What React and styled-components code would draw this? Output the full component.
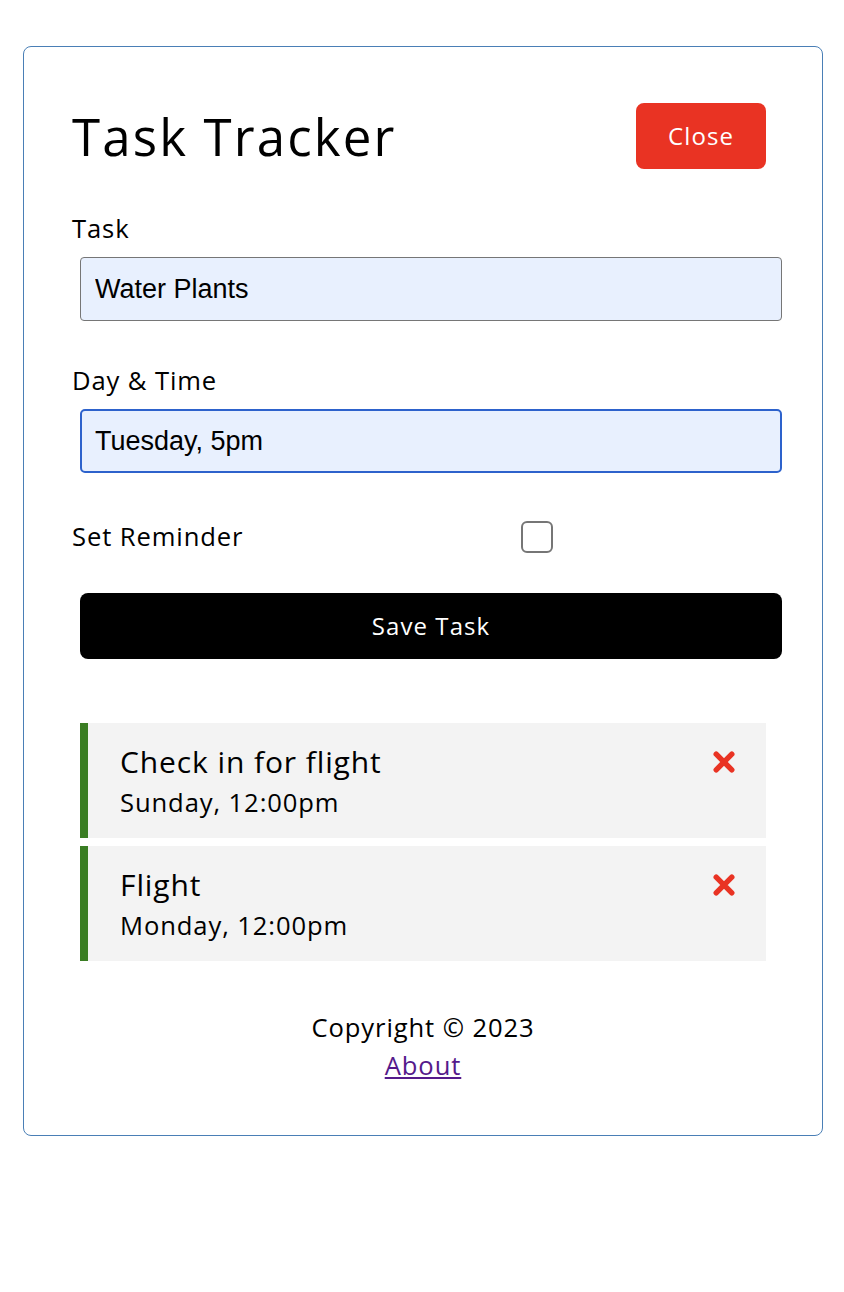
import React, { useState } from 'react';
import styled, { createGlobalStyle } from 'styled-components';

const GlobalStyle = createGlobalStyle`
  * {
    box-sizing: border-box;
    margin: 0;
    padding: 0;
  }
  body {
    background: #fff;
    padding-left: 2px;
    font-family: "Open Sans", "Noto Sans", sans-serif;
    font-size: 25.6px;
    line-height: 1.5;
    letter-spacing: 0.035em;
    color: #000;
  }
`;

const Container = styled.div`
  max-width: 800px;
  margin: 46px auto 0;
  padding: 48px 48px 49px;
  border: 1px solid #4a7fb6;
  border-radius: 8px;
`;

const Header = styled.header`
  display: flex;
  justify-content: space-between;
  align-items: center;
  margin-bottom: 32px;
`;

const Title = styled.h1`
  font-size: 51px;
  font-weight: 500;
  letter-spacing: 0.042em;
`;

const Button = styled.button`
  display: ${({ block }) => (block ? 'block' : 'inline-block')};
  width: ${({ block }) => (block ? '100%' : 'auto')};
  background: ${({ color }) => color};
  color: #fff;
  border: none;
  border-radius: 8px;
  margin: 8px;
  padding: 16px 32px;
  font-family: "Open Sans", "Noto Sans", sans-serif;
  font-size: 24px;
  letter-spacing: 0.045em;
  line-height: 34px;
  cursor: pointer;
`;

const Form = styled.form`
  margin-bottom: 64px;
`;

const FormControl = styled.div`
  display: flow-root;
  margin: 32px 0;
`;

const Label = styled.label`
  display: block;
  line-height: 40px;
`;

const Input = styled.input`
  display: block;
  width: 100%;
  height: 64px;
  margin: 8px;
  padding: 5px ${({ focused }) => (focused ? '13px' : '14px')};
  font-family: "Liberation Sans", Arial, sans-serif;
  font-size: 27px;
  letter-spacing: 0;
  color: #000;
  background: #e8f0fe;
  border: ${({ focused }) => (focused ? '2px solid #2d62cc' : '1px solid #767676')};
  border-radius: ${({ focused }) => (focused ? '5px' : '4px')};
  outline: none;
`;

const CheckRow = styled.div`
  display: flex;
  align-items: center;
  justify-content: space-between;
  margin: 32px 0;
`;

const CheckLabel = styled.label`
  flex: 1;
`;

const CheckBoxWrap = styled.div`
  flex: 2;
  display: flex;
  justify-content: center;
  margin: 8px;
`;

const CheckBox = styled.input`
  appearance: none;
  width: 32px;
  height: 32px;
  border: 2px solid #767676;
  border-radius: 6px;
  background: #fff;
  cursor: pointer;
  &:checked {
    background: #2d62cc;
    border-color: #2d62cc;
  }
`;

const Task = styled.div`
  background: #f3f3f3;
  margin: 8px;
  padding: 16px 31px 16px 32px;
  border-left: ${({ reminder }) => (reminder ? '8px solid #3a7d23' : 'none')};
  cursor: pointer;
`;

const TaskTitle = styled.h3`
  display: flex;
  align-items: center;
  justify-content: space-between;
  font-size: 30px;
  font-weight: 400;
  line-height: 45px;
`;

const TaskDay = styled.p`
  font-size: 25.6px;
  line-height: 38px;
`;

const Footer = styled.footer`
  margin-top: 48px;
  text-align: center;
`;

const FooterLink = styled.a`
  color: #551a8b;
  text-decoration: underline;
`;

const DeleteIcon = () => (
  <svg width="22" height="22" viewBox="0 0 22 22" style={{ cursor: 'pointer' }}>
    <path d="M3.2 3.2 L18.8 18.8 M18.8 3.2 L3.2 18.8" stroke="#e93323" strokeWidth="5.4" strokeLinecap="round" />
  </svg>
);

const tasks = [
  { id: 1, text: 'Check in for flight', day: 'Sunday, 12:00pm', reminder: true },
  { id: 2, text: 'Flight', day: 'Monday, 12:00pm', reminder: true },
];

const App = () => {
  const [text, setText] = useState('Water Plants');
  const [day, setDay] = useState('Tuesday, 5pm');
  const [reminder, setReminder] = useState(false);

  return (
    <>
      <GlobalStyle />
      <Container>
        <Header>
          <Title>Task Tracker</Title>
          <Button color="#e93323">Close</Button>
        </Header>
        <Form onSubmit={(e) => e.preventDefault()}>
          <FormControl>
            <Label>Task</Label>
            <Input type="text" value={text} onChange={(e) => setText(e.target.value)} />
          </FormControl>
          <FormControl>
            <Label>Day &amp; Time</Label>
            <Input type="text" focused value={day} onChange={(e) => setDay(e.target.value)} />
          </FormControl>
          <CheckRow>
            <CheckLabel>Set Reminder</CheckLabel>
            <CheckBoxWrap>
              <CheckBox type="checkbox" checked={reminder} onChange={(e) => setReminder(e.target.checked)} />
            </CheckBoxWrap>
          </CheckRow>
          <Button block color="#000" type="submit">Save Task</Button>
        </Form>
        {tasks.map((task) => (
          <Task key={task.id} reminder={task.reminder}>
            <TaskTitle>
              {task.text} <DeleteIcon />
            </TaskTitle>
            <TaskDay>{task.day}</TaskDay>
          </Task>
        ))}
        <Footer>
          <p>Copyright &copy; 2023</p>
          <FooterLink href="#about">About</FooterLink>
        </Footer>
      </Container>
    </>
  );
};

export default App;
